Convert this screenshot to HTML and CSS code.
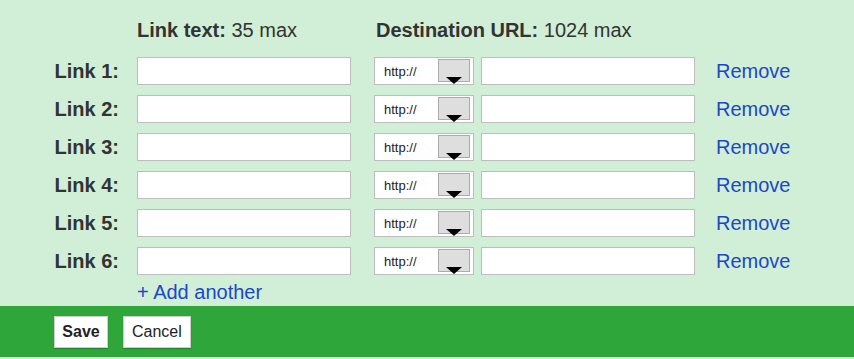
FILE: index.html
```html
<!DOCTYPE html>
<html>
<head>
<meta charset="utf-8">
<link rel="stylesheet" href="styles.css">
</head>
<body>
<div class="panel">
  <div class="head">
    <div class="head-text"><b>Link text:</b> 35 max</div>
    <div class="head-url"><b>Destination URL:</b> 1024 max</div>
  </div>
  <div class="rows">
    <div class="row"><label class="lbl">Link 1:</label><input class="txt" type="text"><div class="sel"><span class="sel-val">http://</span><span class="sel-btn"><span class="arrow"></span></span></div><input class="url" type="text"><a class="remove" href="#">Remove</a></div>
    <div class="row"><label class="lbl">Link 2:</label><input class="txt" type="text"><div class="sel"><span class="sel-val">http://</span><span class="sel-btn"><span class="arrow"></span></span></div><input class="url" type="text"><a class="remove" href="#">Remove</a></div>
    <div class="row"><label class="lbl">Link 3:</label><input class="txt" type="text"><div class="sel"><span class="sel-val">http://</span><span class="sel-btn"><span class="arrow"></span></span></div><input class="url" type="text"><a class="remove" href="#">Remove</a></div>
    <div class="row"><label class="lbl">Link 4:</label><input class="txt" type="text"><div class="sel"><span class="sel-val">http://</span><span class="sel-btn"><span class="arrow"></span></span></div><input class="url" type="text"><a class="remove" href="#">Remove</a></div>
    <div class="row"><label class="lbl">Link 5:</label><input class="txt" type="text"><div class="sel"><span class="sel-val">http://</span><span class="sel-btn"><span class="arrow"></span></span></div><input class="url" type="text"><a class="remove" href="#">Remove</a></div>
    <div class="row"><label class="lbl">Link 6:</label><input class="txt" type="text"><div class="sel"><span class="sel-val">http://</span><span class="sel-btn"><span class="arrow"></span></span></div><input class="url" type="text"><a class="remove" href="#">Remove</a></div>
  </div>
  <a class="add" href="#">+ Add another</a>
</div>
<div class="footer">
  <button class="btn btn-save">Save</button>
  <button class="btn">Cancel</button>
</div>
</body>
</html>
```
FILE: styles.css
```css
html, body {
  margin: 0;
  padding: 0;
}
body {
  background: #d1eed6;
  font-family: "Liberation Sans", Arial, sans-serif;
  color: #333;
  width: 854px;
  height: 359px;
  overflow: hidden;
}
.panel {
  padding-top: 19px;
  height: 306px;
  box-sizing: border-box;
}
.head {
  display: flex;
  font-size: 20px;
  line-height: 23px;
  padding-left: 137px;
}
.head b { color: #333; }
.head-text { width: 239px; }
.rows {
  margin-top: 15px;
  display: flex;
  flex-direction: column;
  gap: 10px;
}
.row {
  display: flex;
  align-items: center;
  height: 28px;
}
.lbl {
  width: 119px;
  text-align: right;
  font-weight: bold;
  font-size: 20px;
  margin-right: 18px;
  color: #333;
}
.txt, .url {
  width: 214px;
  height: 28px;
  box-sizing: border-box;
  border: 1px solid #bdbdbd;
  background: #fff;
  margin: 0;
  padding: 0 4px;
  outline: none;
}
.txt { margin-right: 23px; }
.sel {
  width: 100px;
  height: 28px;
  box-sizing: border-box;
  border: 1px solid #bdbdbd;
  background: #fff;
  display: flex;
  align-items: center;
  position: relative;
  margin-right: 7px;
}
.sel-val {
  font-size: 13px;
  color: #222;
  padding-left: 9px;
  width: 54px;
}
.sel-btn {
  position: absolute;
  left: 63px;
  top: 1px;
  width: 32px;
  height: 23px;
  box-sizing: border-box;
  background: #dedede;
  border: 1px solid #ababab;
}
.arrow {
  position: absolute;
  left: 7px;
  top: 17px;
  width: 0;
  height: 0;
  border-left: 8px solid transparent;
  border-right: 8px solid transparent;
  border-top: 7px solid #000;
}
.url { margin-right: 21px; }
.remove, .add {
  color: #1b47c8;
  text-decoration: none;
  font-size: 20px;
}
.add {
  display: inline-block;
  margin-left: 137px;
  margin-top: 6px;
  line-height: 23px;
}
.footer {
  background: #2fa63a;
  height: 51px;
  box-sizing: border-box;
  padding: 10px 0 0 54px;
  display: flex;
  align-items: flex-start;
  gap: 15px;
}
.btn {
  height: 32px;
  background: #fff;
  border: 1px solid #cfcfcf;
  box-shadow: 0 1px 1px rgba(0,0,0,0.2);
  font-family: "Liberation Sans", Arial, sans-serif;
  font-size: 16px;
  color: #222;
  padding: 0 8px;
  margin: 0;
  border-radius: 0;
}
.btn-save {
  font-weight: bold;
  width: 54px;
  padding: 0;
}
```
